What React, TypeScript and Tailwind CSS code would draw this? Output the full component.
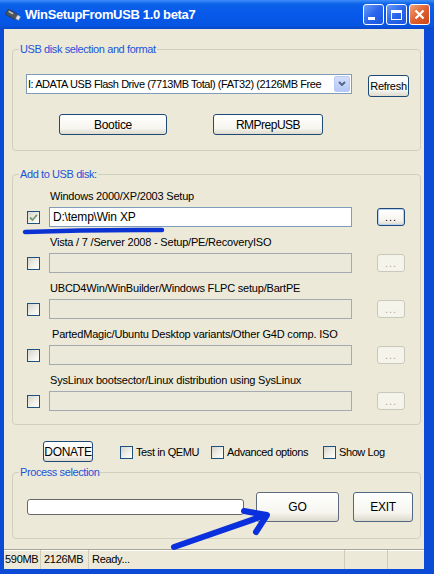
import React from 'react'

const rows = [
  { label: 'Windows 2000/XP/2003 Setup', value: 'D:\\temp\\Win XP', on: true, pad: 'ml-[37px]' },
  { label: 'Vista / 7 /Server 2008 - Setup/PE/RecoveryISO', value: '', on: false, pad: 'ml-[37px]' },
  { label: 'UBCD4Win/WinBuilder/Windows FLPC setup/BartPE', value: '', on: false, pad: 'ml-[37px]' },
  { label: 'PartedMagic/Ubuntu Desktop variants/Other G4D comp. ISO', value: '', on: false, pad: 'ml-[39px]' },
  { label: 'SysLinux bootsector/Linux distribution using SysLinux', value: '', on: false, pad: 'ml-[37px]' },
]

function XpButton({ children, className = '', disabled = false }: { children: React.ReactNode; className?: string; disabled?: boolean }) {
  return (
    <div
      className={`flex items-center justify-center rounded-[3px] border leading-none ${
        disabled
          ? 'border-[#cac8bb] bg-[#f5f4ea] text-[#aca899]'
          : 'border-[#1f4a78] bg-[linear-gradient(180deg,#ffffff_0%,#f6f5ef_70%,#dedbcd_100%)] text-black'
      } ${className}`}
    >
      {children}
    </div>
  )
}

function Check({ checked = false }: { checked?: boolean }) {
  return (
    <div className="w-[13px] h-[13px] shrink-0 border border-[#1c5180] bg-[linear-gradient(135deg,#d6d5cc_0%,#f2f1ea_60%,#ffffff_100%)] flex items-center justify-center">
      {checked && (
        <svg width="9" height="9" viewBox="0 0 9 9">
          <path d="M1 4.5 L3.5 7 L8 1.8" fill="none" stroke="#7c9a78" strokeWidth="1.8" />
        </svg>
      )}
    </div>
  )
}

function Legend({ children }: { children: React.ReactNode }) {
  return (
    <legend className="ml-[6px] px-[1px] text-[11px] tracking-[-0.4px] leading-[13px] text-[#2253d8]">{children}</legend>
  )
}

export default function App() {
  return (
    <div className="relative w-[434px] h-[574px] bg-[#0b4bd6] flex flex-col font-['Liberation_Sans',Arial,sans-serif] overflow-hidden">
      {/* Title bar */}
      <div className="h-[29px] shrink-0 flex items-center bg-[linear-gradient(180deg,#3d8ef9_0%,#0c61e8_14%,#0659ea_50%,#0655e2_88%,#0a47c9_100%)]">
        <svg width="17" height="14" viewBox="0 0 17 14" className="ml-[5px]">
          <g transform="rotate(28 8 7)">
            <rect x="1" y="4" width="11" height="6" rx="1.2" fill="#4f555c" stroke="#2a2e33" strokeWidth="0.6" />
            <rect x="2.5" y="5" width="5" height="1.6" fill="#c3c8cd" />
            <rect x="12" y="5" width="3.5" height="4" fill="#e3e5e8" stroke="#8a9096" strokeWidth="0.5" />
          </g>
        </svg>
        <span className="ml-[3px] text-[13px] font-bold text-white tracking-[-0.35px]">WinSetupFromUSB 1.0 beta7</span>
        <div className="ml-auto mr-[4px] flex gap-[2px]">
          <div className="w-[21px] h-[21px] rounded-[3px] border border-white bg-[linear-gradient(135deg,#6d9cf7_0%,#2a66ec_50%,#1c55e0_100%)] flex items-end pl-[4px] pb-[4px]">
            <div className="w-[7px] h-[3px] bg-white" />
          </div>
          <div className="w-[21px] h-[21px] rounded-[3px] border border-white bg-[linear-gradient(135deg,#6d9cf7_0%,#2a66ec_50%,#1c55e0_100%)] flex items-center justify-center">
            <div className="w-[11px] h-[10px] border border-white border-t-[3px]" />
          </div>
          <div className="w-[21px] h-[21px] rounded-[3px] border border-white bg-[linear-gradient(135deg,#f0a27c_0%,#e0612f_50%,#c94417_100%)] flex items-center justify-center">
            <svg width="11" height="11" viewBox="0 0 11 11">
              <path d="M1.5 1.5 L9.5 9.5 M9.5 1.5 L1.5 9.5" stroke="white" strokeWidth="2.2" />
            </svg>
          </div>
        </div>
      </div>

      {/* Client area */}
      <div className="flex-1 ml-[4px] mr-[10px] mb-[5px] bg-[#ece9d8] flex flex-col text-black">
        {/* USB disk selection */}
        <fieldset className="mt-[14px] ml-[8px] mr-[3px] border border-[#d0d0bf] rounded-[4px] pb-[15px]">
          <Legend>USB disk selection and format</Legend>
          <div className="mt-[18px] flex items-start">
            <div className="ml-[13px] w-[326px] h-[20px] border border-[#7f9db9] bg-white flex items-center">
              <span className="pl-[1px] text-[11px] tracking-[-0.45px] whitespace-nowrap flex-1">
                I: ADATA USB Flash Drive (7713MB Total) (FAT32) (2126MB Free
              </span>
              <div className="w-[16px] h-[16px] mr-[1px] rounded-[2px] bg-[linear-gradient(180deg,#d3defb_0%,#b5c8f6_100%)] border border-[#b8cbf5] flex items-center justify-center">
                <svg width="8" height="6" viewBox="0 0 8 6">
                  <path d="M1 1 L4 4 L7 1" fill="none" stroke="#4d6185" strokeWidth="1.8" />
                </svg>
              </div>
            </div>
            <XpButton className="ml-[16px] mt-[1px] w-[41px] h-[22px] text-[11px] tracking-[-0.3px]">Refresh</XpButton>
          </div>
          <div className="mt-[17px] flex">
            <XpButton className="ml-[46px] w-[108px] h-[21px] text-[12px] tracking-[-0.3px]">Bootice</XpButton>
            <XpButton className="ml-[46px] w-[110px] h-[21px] text-[12px] tracking-[-0.5px]">RMPrepUSB</XpButton>
          </div>
        </fieldset>

        {/* Add to USB disk */}
        <fieldset className="mt-[17px] ml-[8px] mr-[3px] border border-[#d0d0bf] rounded-[4px] pb-[13px]">
          <Legend>Add to USB disk:</Legend>
          <div className="mt-[9px] flex flex-col gap-[9px]">
            {rows.map((r) => (
              <div key={r.label} className="flex flex-col">
                <div className={`${r.pad} h-[13px] text-[11px] tracking-[-0.2px] leading-[13px] whitespace-nowrap`}>
                  {r.label}
                </div>
                <div className="mt-[4px] h-[20px] flex items-center">
                  <div className="ml-[14px]">
                    <Check checked={r.on} />
                  </div>
                  <div
                    className={`ml-[9px] w-[303px] h-[20px] border flex items-center text-[12px] tracking-[-0.2px] pl-[3px] ${
                      r.on ? 'border-[#7f9db9] bg-white' : 'border-[#a3aab0] bg-[#ebe9da]'
                    }`}
                  >
                    {r.value}
                  </div>
                  <XpButton
                    disabled={!r.on}
                    className={`ml-[25px] w-[28px] h-[18px] text-[11px] tracking-[1px] ${r.on ? 'shadow-[inset_0_0_0_1px_#b9d1f5]' : ''}`}
                  >
                    ...
                  </XpButton>
                </div>
              </div>
            ))}
          </div>
        </fieldset>

        {/* Options row */}
        <div className="mt-[16px] flex items-center h-[21px] text-[11px] tracking-[-0.4px]">
          <XpButton className="ml-[39px] w-[50px] h-[21px] text-[12px] tracking-[-0.3px]">DONATE</XpButton>
          <div className="ml-[27px] w-[91px] flex items-center gap-[3px] mt-[2px]">
            <Check />
            <span>Test in QEMU</span>
          </div>
          <div className="w-[112px] flex items-center gap-[3px] mt-[2px]">
            <Check />
            <span>Advanced options</span>
          </div>
          <div className="flex items-center gap-[3px] mt-[2px]">
            <Check />
            <span>Show Log</span>
          </div>
        </div>

        {/* Process selection */}
        <fieldset className="mt-[4px] ml-[8px] mr-[3px] border border-[#d0d0bf] rounded-[4px] pb-[16px]">
          <Legend>Process selection</Legend>
          <div className="mt-[13px] h-[30px] flex items-center">
            <div className="ml-[14px] w-[217px] h-[16px] rounded-[3px] border border-[#686868] bg-white" />
            <XpButton className="ml-[12px] w-[83px] h-[30px] text-[12px] border-[#5d6b7c]">GO</XpButton>
            <XpButton className="ml-[14px] w-[60px] h-[30px] text-[12px] tracking-[-0.3px] border-[#4f6781]">EXIT</XpButton>
          </div>
        </fieldset>

        {/* Status bar */}
        <div className="mt-auto h-[20px] border-t border-[#a8a594] shadow-[inset_0_1px_0_#ffffff] flex text-[11px] tracking-[-0.3px] items-stretch">
          <div className="w-[37px] pl-[1px] flex items-center border-r border-[#cfccbd]">590MB</div>
          <div className="w-[48px] pl-[3px] flex items-center border-r border-[#cfccbd]">2126MB</div>
          <div className="w-[256px] pl-[3px] flex items-center border-r border-[#cfccbd]">Ready...</div>
          <div className="w-[43px] border-r border-[#cfccbd]" />
          <div className="flex-1" />
        </div>
      </div>

      {/* Hand-drawn annotations on the screenshot */}
      <svg className="absolute inset-0 pointer-events-none" width="434" height="574" viewBox="0 0 434 574">
        <path d="M25 232 Q 90 229.5 162 230" fill="none" stroke="#0b33d4" strokeWidth="4.5" strokeLinecap="round" />
        <path d="M174 547 L266 515" fill="none" stroke="#0a30de" strokeWidth="6" strokeLinecap="round" />
        <path d="M244 511 L267 515 L256 532" fill="none" stroke="#0a30de" strokeWidth="6" strokeLinecap="round" strokeLinejoin="round" />
      </svg>
    </div>
  )
}
